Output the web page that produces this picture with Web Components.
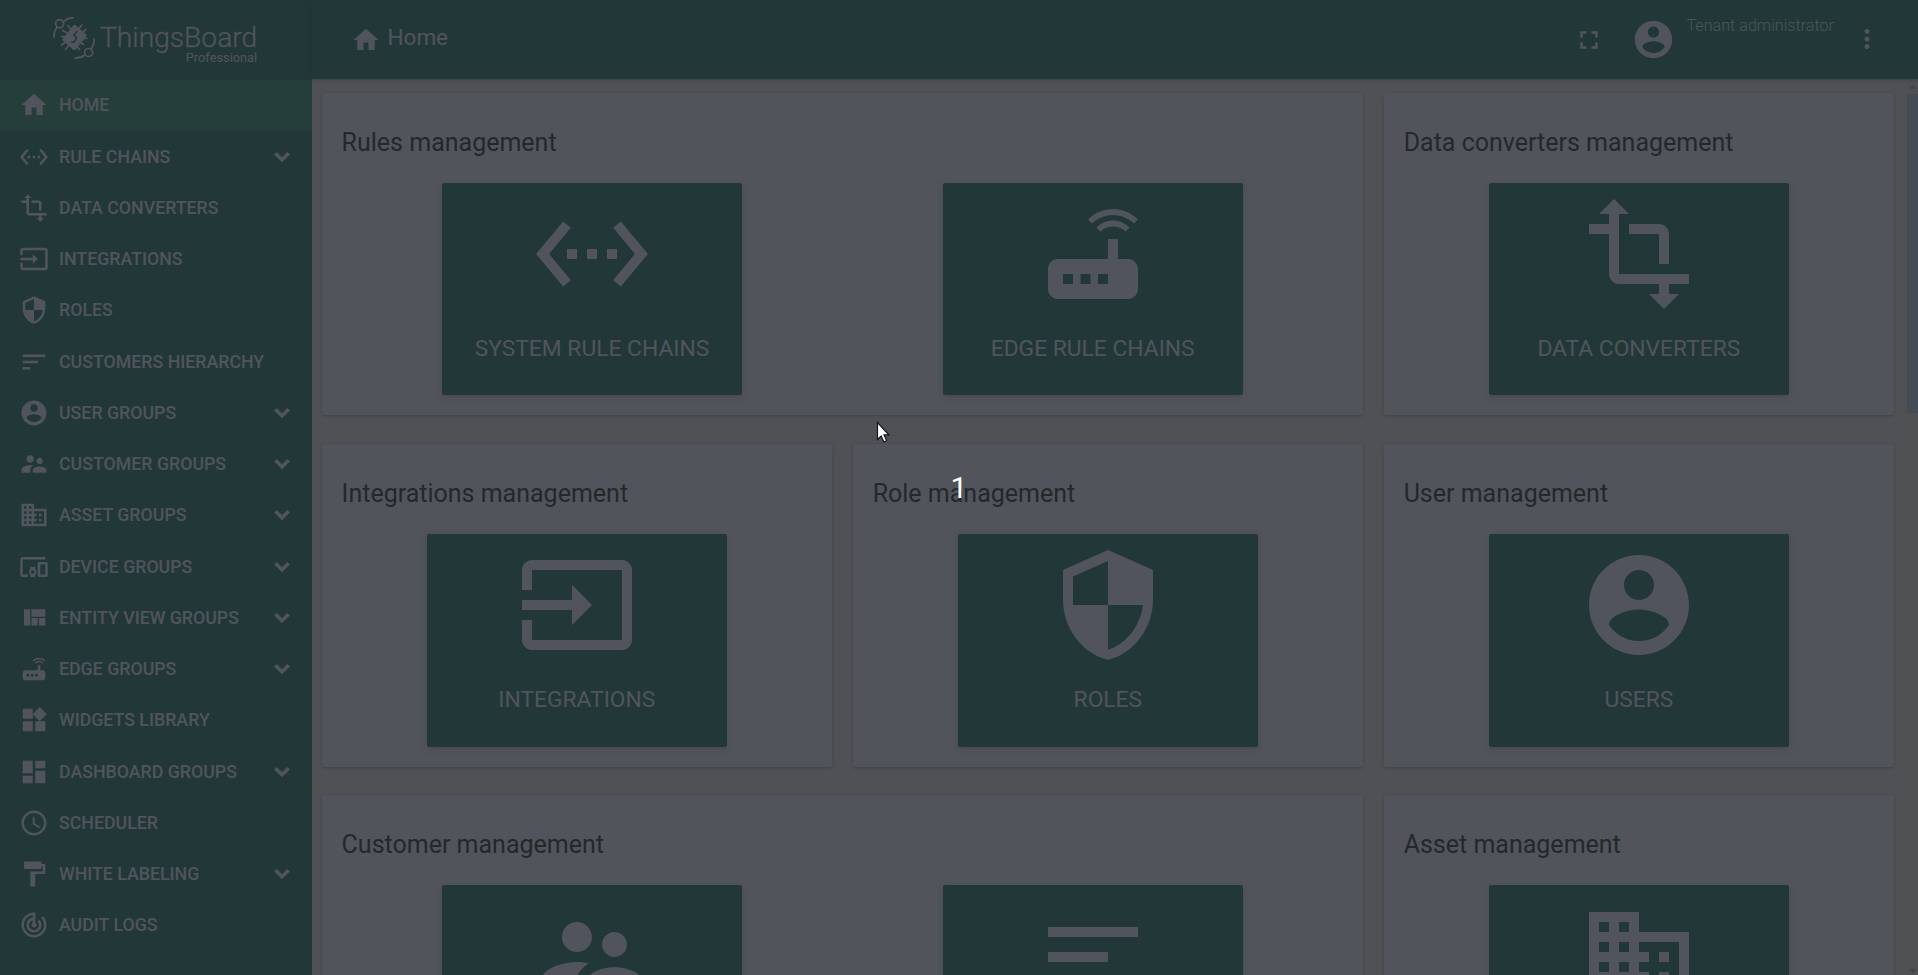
<!DOCTYPE html>
<html lang="en">
<head>
<meta charset="utf-8">
<title>ThingsBoard | Home</title>
<style>
html,body{margin:0;height:100%;overflow:hidden}
body{font-family:Roboto,"Liberation Sans",sans-serif;color:#51545c;background:#4f5155}
</style>
</head>
<body>
<tb-app></tb-app>
<script>
const ICONS = {
home:'M10 20v-6h4v6h5v-8h3L12 3 2 12h3v8z',
ethernet:'M7.77 6.76L6.23 5.48.82 12l5.41 6.52 1.54-1.28L3.42 12l4.35-5.24zM7 13h2v-2H7v2zm10-2h-2v2h2v-2zm-6 2h2v-2h-2v2zm6.77-7.52l-1.54 1.28L20.58 12l-4.35 5.24 1.54 1.28L23.18 12l-5.41-6.52z',
transform:'M22 18v-2H8V4h2L7 1 4 4h2v2H2v2h4v8c0 1.1.9 2 2 2h8v2h-2l3 3 3-3h-2v-2h4zM10 8h6v6h2V8c0-1.1-.9-2-2-2h-6v2z',
input:'M21 3.01H3c-1.1 0-2 .9-2 2V9h2V4.99h18v14.03H3V15H1v4.01c0 1.1.9 1.98 2 1.98h18c1.1 0 2-.88 2-1.98v-14c0-1.11-.9-2-2-2zM11 16l4-4-4-4v3H1v2h10v3z',
security:'M12 1L3 5v6c0 5.55 3.84 10.74 9 12 5.16-1.26 9-6.45 9-12V5l-9-4zm0 10.99h7c-.53 4.12-3.28 7.79-7 8.94V12H5V6.3l7-3.11v8.8z',
sort:'M3 18h6v-2H3v2zM3 6v2h18V6H3zm0 7h12v-2H3v2z',
account:'M12 2C6.48 2 2 6.48 2 12s4.48 10 10 10 10-4.48 10-10S17.52 2 12 2zm0 3c1.66 0 3 1.34 3 3s-1.34 3-3 3-3-1.34-3-3 1.34-3 3-3zm0 14.2c-2.5 0-4.71-1.28-6-3.22.03-1.99 4-3.08 6-3.08 1.99 0 5.97 1.09 6 3.08-1.29 1.94-3.5 3.22-6 3.22z',
supervisor:'M16.5 12c1.38 0 2.49-1.12 2.49-2.5S17.88 7 16.5 7C15.12 7 14 8.12 14 9.5s1.12 2.5 2.5 2.5zM9 11c1.66 0 2.99-1.34 2.99-3S10.66 5 9 5C7.34 5 6 6.34 6 8s1.34 3 3 3zm7.5 3c-1.83 0-5.5.92-5.5 2.75V19h11v-2.25c0-1.83-3.67-2.75-5.5-2.75zM9 13c-2.33 0-7 1.17-7 3.5V19h7v-2.25c0-.85.33-2.34 2.37-3.47C10.5 13.1 9.66 13 9 13z',
domain:'M12 7V3H2v18h20V7H12zM6 19H4v-2h2v2zm0-4H4v-2h2v2zm0-4H4V9h2v2zm0-4H4V5h2v2zm4 12H8v-2h2v2zm0-4H8v-2h2v2zm0-4H8V9h2v2zm0-4H8V5h2v2zm10 12h-8v-2h2v-2h-2v-2h2v-2h-2V9h8v10zm-2-8h-2v2h2v-2zm0 4h-2v2h2v-2z',
devices:'M3 6h18V4H3c-1.1 0-2 .9-2 2v12c0 1.1.9 2 2 2h4v-2H3V6zm10 6H9v1.78c-.61.55-1 1.33-1 2.22s.39 1.67 1 2.22V20h4v-1.78c.61-.55 1-1.34 1-2.22s-.39-1.67-1-2.22V12zm-2 5.5c-.83 0-1.5-.67-1.5-1.5s.67-1.5 1.5-1.5 1.5.67 1.5 1.5-.67 1.5-1.5 1.5zM22 8h-6c-.5 0-1 .5-1 1v10c0 .5.5 1 1 1h6c.5 0 1-.5 1-1V9c0-.5-.5-1-1-1zm-1 10h-4v-8h4v8z',
quilt:'M10 18h5v-6h-5v6zm-6 0h5V5H4v13zm12 0h5v-6h-5v6zM10 5v6h11V5H10z',
router:'M20.2 5.9l.8-.8C19.6 3.7 17.8 3 16 3s-3.6.7-5 2.1l.8.8C13 4.8 14.5 4.2 16 4.2s3 .6 4.2 1.7zm-.9.8c-.9-.9-2.1-1.4-3.3-1.4s-2.4.5-3.3 1.4l.8.8c.7-.7 1.6-1 2.5-1 .9 0 1.8.3 2.5 1l.8-.8zM19 13h-2V9h-2v4H5c-1.1 0-2 .9-2 2v4c0 1.1.9 2 2 2h14c1.1 0 2-.9 2-2v-4c0-1.1-.9-2-2-2zM8 18H6v-2h2v2zm3.5 0h-2v-2h2v2zm3.5 0h-2v-2h2v2z',
widgets:'M13 13v8h8v-8h-8zM3 21h8v-8H3v8zM3 3v8h8V3H3zm13.66-1.31L11 7.34 16.66 13l5.66-5.66-5.66-5.65z',
dashboard:'M3 13h8V3H3v10zm0 8h8v-6H3v6zm10 0h8V11h-8v10zm0-18v6h8V3h-8z',
schedule:'M11.99 2C6.47 2 2 6.48 2 12s4.47 10 9.99 10C17.52 22 22 17.52 22 12S17.52 2 11.99 2zM12 20c-4.42 0-8-3.58-8-8s3.58-8 8-8 8 3.58 8 8-3.58 8-8 8zm.5-13H11v6l5.25 3.15.75-1.23-4.5-2.67z',
paint:'M18 4V3c0-.55-.45-1-1-1H5c-.55 0-1 .45-1 1v4c0 .55.45 1 1 1h12c.55 0 1-.45 1-1V6h1v4H9v11c0 .55.45 1 1 1h2c.55 0 1-.45 1-1v-9h8V4h-3z',
track:'M19.07 4.93l-1.41 1.41C19.1 7.79 20 9.79 20 12c0 4.42-3.58 8-8 8s-8-3.58-8-8c0-4.08 3.05-7.44 7-7.93v2.02C8.16 6.57 6 9.03 6 12c0 3.31 2.69 6 6 6s6-2.69 6-6c0-1.66-.67-3.16-1.76-4.24l-1.41 1.41C15.55 9.9 16 10.9 16 12c0 2.21-1.79 4-4 4s-4-1.79-4-4c0-1.86 1.28-3.41 3-3.86v2.14c-.6.35-1 .98-1 1.72 0 1.1.9 2 2 2s2-.9 2-2c0-.74-.4-1.38-1-1.72V2h-1C6.48 2 2 6.48 2 12s4.48 10 10 10 10-4.48 10-10c0-2.76-1.12-5.26-2.93-7.07z',
fullscreen:'M7 14H5v5h5v-2H7v-3zm-2-4h2V7h3V5H5v5zm12 7h-3v2h5v-5h-2v3zM14 5v2h3v3h2V5h-5z',
more:'M12 8c1.1 0 2-.9 2-2s-.9-2-2-2-2 .9-2 2 .9 2 2 2zm0 2c-1.1 0-2 .9-2 2s.9 2 2 2 2-.9 2-2-.9-2-2-2zm0 6c-1.1 0-2 .9-2 2s.9 2 2 2 2-.9 2-2-.9-2-2-2z',
chevron:'M7.8 7.9L12 12.1l4.2-4.2L18.3 10 12 16.2 5.7 10z'
};
const define = (name, render) => customElements.define(name, class extends HTMLElement {
  connectedCallback() {
    if (this.shadowRoot) return;
    this.attachShadow({mode: 'open'}).innerHTML = render(this);
  }
});

define('tb-icon', el => `
<style>:host{display:block;flex:none;width:var(--size,30px);height:var(--size,30px)}svg{display:block;width:100%;height:100%;fill:currentColor}</style>
<svg viewBox="0 0 24 24"><path d="${ICONS[el.getAttribute('name')]}"/></svg>`);

define('tb-logo', () => `
<style>
:host{display:flex;box-sizing:border-box;height:79px;padding:14px 0 0 50px;color:#51545c}
svg{width:49px;height:48px;flex:none}
.words{display:flex;flex-direction:column;align-items:flex-end;padding-top:10px;margin-left:1px}
.name{font-size:28.200px;line-height:28px;font-weight:300;-webkit-text-stroke:.3px currentColor}
.edition{font-size:12.800px;line-height:13px;font-weight:400;margin-top:-1px}
</style>
<svg viewBox="50 14 49 48" fill="none" stroke="currentColor" stroke-width="1.7" stroke-linecap="round">
<circle cx="59.6" cy="23.7" r="4"/><circle cx="88.6" cy="52.5" r="4"/>
<path d="M54 37Q54 31 57.2 27M63.2 21.8Q67 18 73 17.8M94.3 39Q94 45 91 49.2M75 58.2Q81 58 85 55"/>
<path d="M74.500 26L85.500 35.500 74.5 49 63.500 39.5Z" fill="currentColor" stroke-width="2.400" stroke-linejoin="round"/>
<path d="M78.5 29l3.5-4M82 33l4-3.500M70.500 29l-2.500-3.500M66.500 32.500l-4-2M64 36.500h-2.500M65 42.500l-3.500 2.500M68.500 45.500l-3 4M80 42.500l4 2M77 46l2.500 3.500M84 38.500h3"/>
<path d="M77 31.500l-3 3.500 2.500 2.500-2 4.500h-3" stroke="#223838" stroke-width="1.500"/>
</svg>
<div class="words"><span class="name">ThingsBoard</span><span class="edition">Professional</span></div>`);

define('tb-menu-item', el => `
<style>
:host{display:flex;align-items:center;box-sizing:border-box;height:51.25px;padding:0 15.500px 0 19px;font-size:17.75px;font-weight:500}
:host([active]){background:#263e3a}
.label{flex:1;margin-left:10px;white-space:nowrap;line-height:24px}
</style>
<tb-icon name="${el.getAttribute('icon')}"></tb-icon>
<span class="label"><slot></slot></span>
${el.hasAttribute('group') ? '<tb-icon name="chevron"></tb-icon>' : ''}`);

define('tb-sidebar', () => {
  const items = [['home','HOME'],['ethernet','RULE CHAINS',1],['transform','DATA CONVERTERS'],['input','INTEGRATIONS'],['security','ROLES'],['sort','CUSTOMERS HIERARCHY'],['account','USER GROUPS',1],['supervisor','CUSTOMER GROUPS',1],['domain','ASSET GROUPS',1],['devices','DEVICE GROUPS',1],['quilt','ENTITY VIEW GROUPS',1],['router','EDGE GROUPS',1],['widgets','WIDGETS LIBRARY'],['dashboard','DASHBOARD GROUPS',1],['schedule','SCHEDULER'],['paint','WHITE LABELING',1],['track','AUDIT LOGS']];
  return `
<style>:host{display:block;width:312px;flex:none;background:#223838}tb-logo{margin-bottom:.8px}</style>
<tb-logo></tb-logo>
${items.map(([i, t, g], n) => `<tb-menu-item icon="${i}"${g ? ' group' : ''}${n ? '' : ' active'}>${t}</tb-menu-item>`).join('')}`;
});

define('tb-toolbar', () => `
<style>
:host{display:flex;align-items:center;box-sizing:border-box;height:79px;flex:none;background:#223838;padding:1px 36.500px 0 39px;position:relative;box-shadow:0 1px 3px rgba(34,56,56,.5)}
h1{margin:-7px auto 0 6.500px;font-size:22.500px;font-weight:400;line-height:30px}
.avatar{--size:45px;margin:-1px 10.500px 0 27px}
.user{align-self:flex-start;font-size:16.150px;font-weight:300;line-height:20px;margin-top:15px;width:165px;color:#4a5658}
.more{margin-top:-2px}
tb-icon:first-of-type{margin-top:-1px}
</style>
<tb-icon name="home"></tb-icon><h1>Home</h1>
<tb-icon name="fullscreen"></tb-icon><tb-icon class="avatar" name="account"></tb-icon>
<span class="user">Tenant administrator</span><tb-icon class="more" name="more"></tb-icon>`);

define('tb-tile', el => `
<style>
:host{display:flex;flex-direction:column;align-items:center;box-sizing:border-box;width:300px;height:212.500px;padding-top:11.250px;background:#223838;border-radius:2.500px;box-shadow:0 2px 5px rgba(60,66,66,.55)}
tb-icon{--size:120px}
span{font-size:22.800px;line-height:30px;margin-top:19.750px;white-space:nowrap}
</style>
<tb-icon name="${el.getAttribute('icon')}"></tb-icon><span><slot></slot></span>`);

define('tb-card', el => `
<style>
:host{display:flex;flex-direction:column;box-sizing:border-box;height:322.500px;padding:35px 20px 0;background:#52545b;border-radius:3px;box-shadow:0 1px 3px #3c4549}
:host([wide]){grid-column:span 2}
h2{margin:0;font-size:25px;font-weight:400;line-height:30px;color:#22292b}
.tiles{display:grid;grid-auto-flow:column;grid-auto-columns:1fr;justify-items:center;margin-top:25px}
</style>
<h2>${el.getAttribute('heading')}</h2><div class="tiles"><slot></slot></div>`);

define('tb-scrollbar', () => `
<style>
:host{display:flex;flex-direction:column;align-items:center;justify-content:space-between;width:11px;flex:none;background:#4e5052}
.top{display:flex;flex-direction:column;align-items:center;padding-top:6px}
.thumb{width:11px;height:319px;background:#434b54;margin-top:5px}
svg{display:block;width:7px;height:4px;fill:#3b4347}
.down{margin-bottom:2px}
</style>
<div class="top"><svg viewBox="0 0 8 4"><path d="M0 4L4 0l4 4z"/></svg><div class="thumb"></div></div>
<svg class="down" viewBox="0 0 8 4"><path d="M0 0l4 4 4-4z"/></svg>`);

define('tb-home', () => `
<style>
:host{display:flex;flex:1;min-height:0;overflow:hidden}
.grid{flex:1;display:grid;grid-template-columns:repeat(3,1fr);grid-auto-rows:322.500px;column-gap:20.600px;row-gap:28.700px;padding:13.900px 12.900px 0 9.600px;align-content:start;overflow:hidden}
</style>
<div class="grid">
<tb-card wide heading="Rules management"><tb-tile icon="ethernet">SYSTEM RULE CHAINS</tb-tile><tb-tile icon="router">EDGE RULE CHAINS</tb-tile></tb-card>
<tb-card heading="Data converters management"><tb-tile icon="transform">DATA CONVERTERS</tb-tile></tb-card>
<tb-card heading="Integrations management"><tb-tile icon="input">INTEGRATIONS</tb-tile></tb-card>
<tb-card heading="Role management"><tb-tile icon="security">ROLES</tb-tile></tb-card>
<tb-card heading="User management"><tb-tile icon="account">USERS</tb-tile></tb-card>
<tb-card wide heading="Customer management"><tb-tile icon="supervisor"></tb-tile><tb-tile icon="sort"></tb-tile></tb-card>
<tb-card heading="Asset management"><tb-tile icon="domain"></tb-tile></tb-card>
</div>
<tb-scrollbar></tb-scrollbar>`);

define('tb-countdown', () => `
<style>
:host{position:absolute;inset:0;display:flex;align-items:center;justify-content:center;color:#fff;font-size:30px;line-height:36px;pointer-events:none}
</style><slot></slot>`);

define('tb-pointer', () => `
<style>:host{position:absolute;left:876px;top:421px}svg{display:block;width:14px;height:23px}</style>
<svg viewBox="0 0 14 23"><path d="M1.500 1.500v17l3.700-3.500 2.700 6 2.800-1.200-2.700-5.900h4.800z" fill="#fff" stroke="#111819" stroke-width="1.200"/></svg>`);

define('tb-app', () => `
<style>
:host{display:flex;position:relative;width:100%;height:100vh;overflow:hidden}
main{flex:1;min-width:0;display:flex;flex-direction:column}
</style>
<tb-sidebar></tb-sidebar>
<main><tb-toolbar></tb-toolbar><tb-home></tb-home></main>
<tb-countdown>1</tb-countdown><tb-pointer></tb-pointer>`);
</script>
</body>
</html>
